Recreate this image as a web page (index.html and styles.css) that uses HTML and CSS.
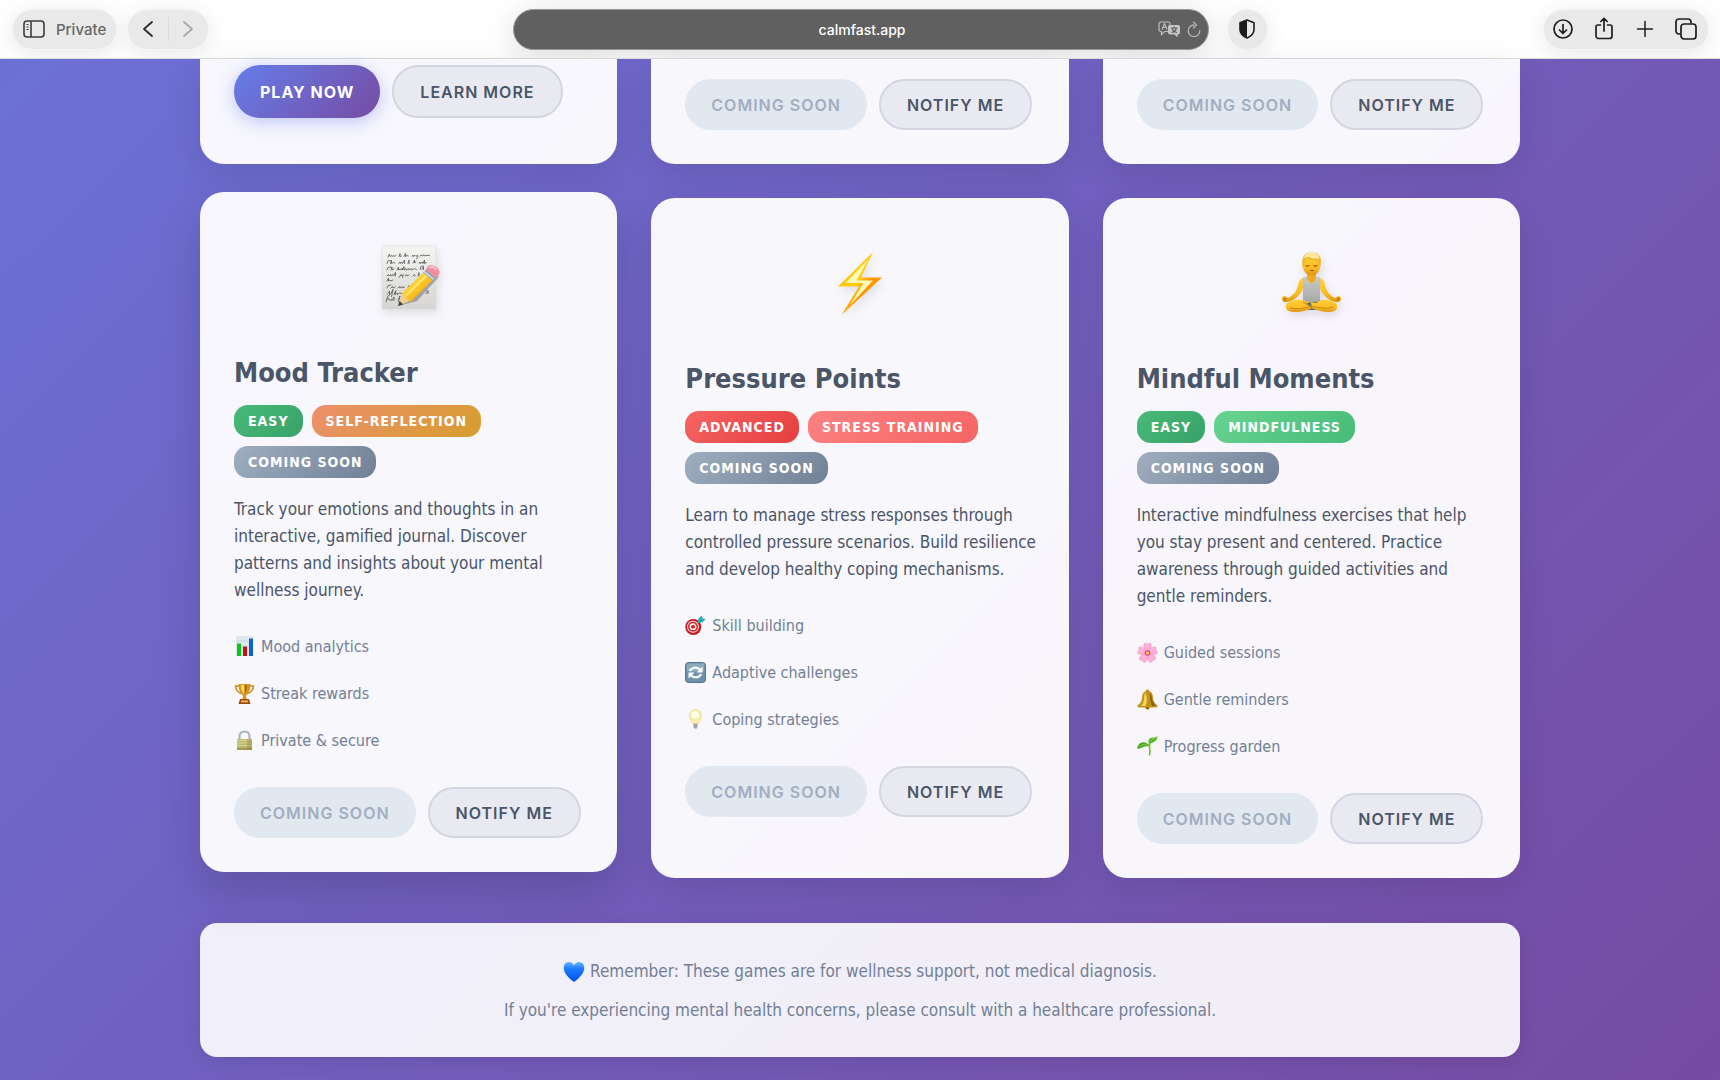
FILE: index.html
```html
<!DOCTYPE html>
<html lang="en">
<head>
<meta charset="utf-8">
<meta name="viewport" content="width=device-width, initial-scale=1">
<title>CalmFast Games</title>
<link rel="stylesheet" href="styles.css">
</head>
<body>
<header class="toolbar">
  <div class="toolbar-left">
    <button class="pill pill-private" type="button">
      <svg width="22" height="18" viewBox="0 0 22 18" fill="none" stroke="#3c3c3c" stroke-width="1.6"><rect x="1" y="1" width="20" height="16" rx="3"/><path d="M8 1v16"/><path d="M3.4 4.5h2.2M3.4 7h2.2M3.4 9.500h2.200" stroke-width="1.200"/></svg>
      <span>Private</span>
    </button>
    <div class="pill pill-nav">
      <button type="button" aria-label="Back"><svg width="12" height="18" viewBox="0 0 12 18" fill="none" stroke="#2b2b2b" stroke-width="1.800" stroke-linecap="round" stroke-linejoin="round"><path d="M10 2L2 9l8 7"/></svg></button>
      <button type="button" aria-label="Forward"><svg width="12" height="18" viewBox="0 0 12 18" fill="none" stroke="#a9a9a9" stroke-width="1.800" stroke-linecap="round" stroke-linejoin="round"><path d="M2 2l8 7-8 7"/></svg></button>
    </div>
  </div>
  <div class="address">
    <input type="text" value="calmfast.app" aria-label="Address">
    <button type="button" aria-label="Translate"><svg width="23" height="17" viewBox="0 0 23 17"><path d="M11 10.500H6.500L3.500 13.500v-3H3a2 2 0 0 1-2-2V3a2 2 0 0 1 2-2h7a2 2 0 0 1 2 2v1" fill="none" stroke="#bdbdbd" stroke-width="1.200"/><path d="M4 8.500l2.500-6 2.500 6M5 6.500h3" fill="none" stroke="#bdbdbd" stroke-width="1.200"/><path d="M12 4h8a2 2 0 0 1 2 2v5.500a2 2 0 0 1-2 2h-.5V16.500l-3-3H12a2 2 0 0 1-2-2V6a2 2 0 0 1 2-2z" fill="#c4c4c4"/><path d="M13 7h6.500M16.200 5.500V7M18.500 7c-.7 2.200-2.500 4-4.800 4.600M14.200 7.500c.7 1.900 2.400 3.500 4.800 4" fill="none" stroke="#5f5f5f" stroke-width="1.100"/></svg></button>
    <button type="button" aria-label="Reload"><svg width="14" height="17" viewBox="0 0 14 17" fill="none" stroke="#b5b5b5" stroke-width="1.300" stroke-linecap="round" stroke-linejoin="round"><path d="M7 4a5.800 5.800 0 1 0 5.800 5.800"/><path d="M6.500 1l3 3-3 3"/></svg></button>
  </div>
  <div class="toolbar-right">
    <button class="pill pill-round" type="button" aria-label="Privacy report"><svg width="16" height="20" viewBox="0 0 16 20"><path d="M8 1l7 2.800v6.700c0 4-3 6.700-7 8.500-4-1.800-7-4.500-7-8.500V3.800z" fill="none" stroke="#1e1e1e" stroke-width="1.600" stroke-linejoin="round"/><path d="M8 1v18c-4-1.800-7-4.500-7-8.500V3.800z" fill="#1e1e1e"/></svg></button>
    <div class="pill pill-actions">
      <button type="button" aria-label="Downloads"><svg width="22" height="24" viewBox="0 0 22 24" fill="none" stroke="#1e1e1e" stroke-width="1.700" stroke-linecap="round" stroke-linejoin="round"><circle cx="11" cy="12" r="9"/><path d="M11 7.500v9M7.500 13l3.500 3.500 3.500-3.500"/></svg></button>
      <button type="button" aria-label="Share"><svg width="22" height="24" viewBox="0 0 22 24" fill="none" stroke="#1e1e1e" stroke-width="1.700" stroke-linecap="round" stroke-linejoin="round"><path d="M7.500 8H5a2 2 0 0 0-2 2v9a2.500 2.500 0 0 0 2.500 2.500h11A2.500 2.500 0 0 0 19 19v-9a2 2 0 0 0-2-2h-2.500M11 14V1.500M7.800 4.500L11 1.400l3.200 3.100"/></svg></button>
      <button type="button" aria-label="New tab"><svg width="22" height="24" viewBox="0 0 22 24" fill="none" stroke="#1e1e1e" stroke-width="1.500" stroke-linecap="round"><path d="M11 4.500v15M3.500 12h15"/></svg></button>
      <button type="button" aria-label="Tab overview"><svg width="22" height="24" viewBox="0 0 22 24" fill="none" stroke="#1e1e1e" stroke-width="1.700" stroke-linejoin="round"><rect x="6" y="7" width="15" height="15" rx="3"/><path d="M5.500 17H4a3 3 0 0 1-3-3V5a3 3 0 0 1 3-3h9a3 3 0 0 1 3 3v1.500"/></svg></button>
    </div>
  </div>
</header>

<main class="page">
  <section class="grid grid-top">
    <article class="card card-cut card-playable">
      <div class="actions"><button class="btn btn-primary" type="button">Play Now</button><button class="btn btn-outline" type="button">Learn More</button></div>
    </article>
    <article class="card card-cut">
      <div class="actions"><button class="btn btn-soon" type="button" disabled>Coming Soon</button><button class="btn btn-outline" type="button">Notify Me</button></div>
    </article>
    <article class="card card-cut">
      <div class="actions"><button class="btn btn-soon" type="button" disabled>Coming Soon</button><button class="btn btn-outline" type="button">Notify Me</button></div>
    </article>
  </section>

  <section class="grid">
    <article class="card card-hover">
      <div class="card-icon">
        <svg width="70" height="70" viewBox="0 0 70 70">
          <defs>
            <linearGradient id="paper" x2="0" y2="1"><stop stop-color="#f4f4f3"/><stop offset="1" stop-color="#d6d5d3"/></linearGradient>
            <linearGradient id="pencil" x1="0" y1="0" x2="1" y2="1"><stop offset=".3" stop-color="#ffd83a"/><stop offset=".6" stop-color="#fbb91c"/><stop offset="1" stop-color="#c98208"/></linearGradient>
          </defs>
          <path d="M8 4h54v63H8z" fill="url(#paper)" stroke="#dddcda" stroke-width=".6"/>
          <g fill="none" stroke="#555" stroke-width=".8" stroke-linecap="round">
            <path d="M14 15l1.500-3 .5 2.500 1.500-1 .5 1 1.500-1 .5 1 2-1M25 14.500l1-3v3l1.500-.5M30 14.500l1.500-3v3l1.500-1 1.500.5M38 14.500l1-1.500.5 1.500 1.500-1.200 1 1 1.500-1.200.5 1.200-1.500 2.500M46 14l1.500-1 .5 1 2-1.200.5 1 5-.5"/>
            <path d="M13 21.500l1-2.500 3-.5M16.500 21.500l1-3v3l2-1 1.500.5M25 21.500l1-1.500.5 1.500 1.500-1.500.5 1.500 2-3.500v3.500M34 21.500l1-3.500v3.500M39 21l1.500-3v3l1.500-1M45 21.500l1-1.500.5 1.500 2-1.500.5 1.500 1.500-3.500v3.500l2-1"/>
            <path d="M13 28l1-2.500 3-.5M17 28l1-3v3l2-1M23 28l1.500-3v3l2-1 .5 1 1.500-2v2l1.500-3.500v3.500l2-1.500.5 1.500 2-1.500.5 1.500 2-1.500.5 1.500 3-1.500 2 1M46 27.500l1-3 2-.5M48 27.500l1.500-3v3"/>
            <path d="M13 34l1.500-1.500.5 1.500 1.500-1.500.5 1.500 2-1.500.5 1.500 2-3.500v3.500M25 35.500l2-3 .5 1.500 1.500-1.500-.5 3M31 34l1.500-1.500.5 1.500 2-1M39 34l1.500-1.500.5 1.500M44 34l1-3.500v3.500"/>
            <path d="M13 39l1.500-3v3l1.500-1 1 1 2-1M13 46l1-2.500 3-.5M17 46l1.500-1.500.5 1.500 2-1M24 46l1.500-1.500.5 1.500 2-1.500.5 1.500 2-1M34 45l1-1.500.5 1.500"/>
            <path d="M13 52.500l1.500-1.500 1-2v3.500l1.500-1 2-4-1.500 7M20 52.500l2-4-1 4 2-1.500.5 1.500 2-1.500 3 .5M52 51.500l2-3v3"/>
            <path d="M12 60l2-6 1.500-1M13 57h2l1 1.500 1.500-1.500.5 1.500 2-3.500v3.500M24 58l2-4-1.500 6"/>
          </g>
          <path d="M24 64L34 47 55 27l10 8-22 24z" fill="#333" opacity=".35"/>
          <path d="M24 64l4.500-13.500 8 8z" fill="#f0cd91"/><path d="M24 64l1.600-5 3.500 3.400z" fill="#3d3d3d"/>
          <path d="M28.500 50.500L51 29l9 7.500-23 23q-2.500 1-2.500-2-3.500.5-3-3-3.500-.5-3-4z" fill="url(#pencil)"/>
          <path d="M31.500 54L55 31" stroke="#ffe368" stroke-width="2.500"/>
          <path d="M49 30.500l3-3 9.500 7.500-3 3.500z" fill="#94a8ba"/><path d="M50 29.500l9.500 7.800" stroke="#d5e1ea" stroke-width="1.200"/>
          <path d="M52 27.500q2-6 7-4 7 2 6.500 8-1 3-4 4.500z" fill="#ee8f99"/><path d="M55.500 26q3-3 7 2" fill="none" stroke="#ffc4c8" stroke-width="2"/>
        </svg>
      </div>
      <h2>Mood Tracker</h2>
      <div class="badges"><span class="badge easy">Easy</span><span class="badge reflection">Self-Reflection</span><span class="badge soon">Coming Soon</span></div>
      <p class="description">Track your emotions and thoughts in an interactive, gamified journal. Discover patterns and insights about your mental wellness journey.</p>
      <ul class="features">
        <li><svg viewBox="0 0 21 21"><path d="M2 0h17.500v20H2z" fill="#dce8ee"/><path d="M2 5h17M2 10h17M2 15h17" stroke="#c2d2da" stroke-width=".6"/><path d="M3 7.500h4V20H3z" fill="#0fc41a"/><path d="M9 10.500h4V20H9z" fill="#c4121a"/><path d="M15 2.500h4V20h-4z" fill="#1262c4"/></svg>Mood analytics</li>
        <li><svg viewBox="0 0 21 21"><path d="M5 3H1.500Q2 9 7.500 10.500M16 3h3.500Q19 9 13.500 10.500" fill="none" stroke="#c9871a" stroke-width="1.500"/><path d="M4.500 1h12q0 9-4.500 11.500l.5 4h-4l.5-4Q4.500 10 4.500 1z" fill="#d8961a"/><path d="M7 2q0 6 3 9V2z" fill="#ffe06a"/><path d="M13 2q0 6-2 9V2z" fill="#a96508"/><path d="M6 16h9l1.500 5H4.500z" fill="#9d4c12"/><path d="M7 17.500h7v1.800H7z" fill="#f4c14a"/></svg>Streak rewards</li>
        <li><svg viewBox="0 0 21 21"><path d="M5.500 10V6.500q0-5 5-5t5 5V10" fill="none" stroke="#a3b2bd" stroke-width="2"/><rect x="3" y="9" width="15" height="11" rx="1" fill="#bdb66d"/><path d="M3 10.500h15M3 13h15M3 15.500h15" stroke="#d8d493" stroke-width="1"/><path d="M13 9.500h5V20h-5z" fill="#847b38" opacity=".35"/><path d="M3 19h15" stroke="#8c8442" stroke-width="1.200"/></svg>Private &amp; secure</li>
      </ul>
      <div class="actions"><button class="btn btn-soon" type="button" disabled>Coming Soon</button><button class="btn btn-outline" type="button">Notify Me</button></div>
    </article>

    <article class="card">
      <div class="card-icon">
        <svg width="70" height="70" viewBox="0 0 70 70">
          <defs><linearGradient id="bolt" x2="1" y2="1"><stop stop-color="#ffb400"/><stop offset=".45" stop-color="#ffcf14"/><stop offset=".6" stop-color="#ff9300"/><stop offset="1" stop-color="#ffae13"/></linearGradient></defs>
          <path d="M48 4L13 38.500h21L16.500 67 57 29.500H36z" fill="url(#bolt)"/>
          <path d="M43 11.500L20.500 35h17.800L25 57l23-24.500H31.500z" fill="#fffbb5"/>
        </svg>
      </div>
      <h2>Pressure Points</h2>
      <div class="badges"><span class="badge advanced">Advanced</span><span class="badge stress">Stress Training</span><span class="badge soon">Coming Soon</span></div>
      <p class="description">Learn to manage stress responses through controlled pressure scenarios. Build resilience and develop healthy coping mechanisms.</p>
      <ul class="features">
        <li><svg viewBox="0 0 21 21"><circle cx="8.300" cy="12" r="8" fill="#c21a24"/><circle cx="8" cy="11.700" r="6" fill="#f3dede"/><circle cx="8" cy="11.700" r="5" fill="#d3222c"/><circle cx="8" cy="11.700" r="3.400" fill="#fff"/><circle cx="8" cy="11.700" r="2" fill="#cf1f29"/><path d="M8 11.700l7-6" stroke="#bd8a37" stroke-width="1"/><path d="M12.500 7.500l1-4L17 .5l.5 3 3.200.5-3.200 3.200-4 .8z" fill="#2ba9b8"/></svg>Skill building</li>
        <li><svg viewBox="0 0 21 21"><rect x=".5" y=".5" width="20" height="20" rx="3" fill="#6e92ae" stroke="#56748e"/><path d="M2 1.500h17v8H2z" fill="#9bb7ca" opacity=".65"/><g fill="none" stroke="#fff" stroke-width="2.200"><path d="M4.500 8.800Q10 2.800 15.500 8"/><path d="M16.500 12.300Q11 18.200 5.500 13"/></g><path d="M17.500 4.500v6h-6zM3.500 16.500v-6h6z" fill="#fff"/></svg>Adaptive challenges</li>
        <li><svg viewBox="0 0 21 21"><path d="M8 14.500Q4.500 9.500 4.500 6.500 5 .7 10.500.5q5.500.2 6 6 0 3-3.500 8z" fill="#faedaa" stroke="#ead58b" stroke-width=".6"/><circle cx="10" cy="6" r="3.800" fill="#fffce9"/><path d="M8.300 14.500h4.500l-.5 4.500q-1.800 1.800-3.500 0z" fill="#bcbcb9"/><path d="M8.500 16h4M8.700 18h3.500" stroke="#777" stroke-width=".7"/></svg>Coping strategies</li>
      </ul>
      <div class="actions"><button class="btn btn-soon" type="button" disabled>Coming Soon</button><button class="btn btn-outline" type="button">Notify Me</button></div>
    </article>

    <article class="card">
      <div class="card-icon">
        <svg width="70" height="70" viewBox="0 0 70 70">
          <defs><linearGradient id="skin" x2="0" y2="1"><stop stop-color="#ffd038"/><stop offset=".65" stop-color="#fbbc22"/><stop offset="1" stop-color="#dd9211"/></linearGradient><linearGradient id="shirt" x2="0" y2="1"><stop stop-color="#c9c9c9"/><stop offset="1" stop-color="#a5a5a5"/></linearGradient></defs>
          <path d="M28 30q-5 0-6 7-1 7-8 12-3 2-5-1-3 0-3 3 1 4 5 3 7-1 13-8 3-4 4-10zM43 30q5 0 6 7 1 7 8 12 3 2 5-1 3 0 3 3-1 4-5 3-7-1-13-8-3-4-4-10z" fill="url(#skin)"/>
          <circle cx="9" cy="51" r="1.500" fill="#c87b0d"/><circle cx="62" cy="51" r="1.500" fill="#c87b0d"/>
          <path d="M31 23h9v9l-4.500 4-4.500-4z" fill="#efaa1e"/>
          <path d="M27 29h4q0 6 4.500 6t4.500-6h4q1 6 0 12v15H27V41q-1-6 0-12z" fill="url(#shirt)"/>
          <path d="M28 54h15v8H28z" fill="#5d6870"/>
          <path d="M26 52q-8-1-13 2-4 2-3 6 1 4 9 4 10 0 17-4l-1-5zM45 52q8-1 13 2 4 2 3 6-1 4-9 4-12 0-22-8l4-2 6 1z" fill="url(#skin)"/>
          <path d="M27 54q8 6 18 6 7 1 12-1M33 59q-8 3-19 1" fill="none" stroke="#c88510" stroke-width="1"/>
          <rect x="27" y="7" width="17" height="20" rx="8" fill="url(#skin)"/>
          <path d="M26.500 19q-2-14 8-14.500 10-.5 10.500 8l-.5 7Q42.500 16 42 12.500q-7 .5-11.500-2.500-2.500 3-3 9z" fill="#edb935"/>
          <path d="M28 10q1-5 7-5.500 7-.3 8.500 5.500-4 2-11-1z" fill="#ffe79b"/>
          <path d="M29.500 17.500q2 1.200 4 0M37.500 17.500q2 1.200 4 0M34 22.500h3.500" fill="none" stroke="#8b5b15" stroke-width="1.200"/>
        </svg>
      </div>
      <h2>Mindful Moments</h2>
      <div class="badges"><span class="badge easy">Easy</span><span class="badge mindfulness">Mindfulness</span><span class="badge soon">Coming Soon</span></div>
      <p class="description">Interactive mindfulness exercises that help you stay present and centered. Practice awareness through guided activities and gentle reminders.</p>
      <ul class="features">
        <li><svg viewBox="0 0 21 21"><g fill="#ffafd8" stroke="#ef86bb" stroke-width=".5"><path id="petal" d="M10.500 11Q5 5 7.500 1.200L10.500 2l3-.8Q16 5 10.500 11z"/><use href="#petal" transform="rotate(72 10.500 11)"/><use href="#petal" transform="rotate(144 10.500 11)"/><use href="#petal" transform="rotate(216 10.500 11)"/><use href="#petal" transform="rotate(288 10.500 11)"/></g><circle cx="10.500" cy="11" r="2.800" fill="#d94a87"/><circle cx="10.500" cy="11" r="1.600" fill="#f4d43c"/></svg>Guided sessions</li>
        <li><svg viewBox="0 0 21 21"><circle cx="10.500" cy="2.200" r="1.700" fill="#b48618"/><circle cx="10.500" cy="18.500" r="2" fill="#91560b"/><path d="M10.500 2q-5.500 0-5.500 7 0 4-4.500 7.500Q0 18.500 3 18.500h15q3 0 2.500-2Q16 13 16 9q0-7-5.500-7z" fill="#c39218"/><path d="M8.500 3.500Q6.500 6 7 10q0 4-3 7h4.500Q10.500 13 9.800 8z" fill="#f1d55b"/><path d="M13 4q2.500 3 2 7l3.500 6H15q-2-5-2-13z" fill="#885c0a"/></svg>Gentle reminders</li>
        <li><svg viewBox="0 0 21 21"><path d="M12.500 19.500Q14 11 10.500 8M12.300 11.500Q12.500 6 16 3.500" fill="none" stroke="#7abb33" stroke-width="1.600"/><path d="M0 12.500Q2 5 8 6.500q3 .5 3 3.500-5 .5-7 2-2 1-4 .5z" fill="#48a61f"/><path d="M11.500 7.500Q10.500 2 15.500 1.500q3 .5 5-1.500 0 7-9 7.500z" fill="#57b629"/><path d="M2 11q4-4 8-2M12.500 6q3-4 7-4.500" fill="none" stroke="#91d44d" stroke-width=".8"/></svg>Progress garden</li>
      </ul>
      <div class="actions"><button class="btn btn-soon" type="button" disabled>Coming Soon</button><button class="btn btn-outline" type="button">Notify Me</button></div>
    </article>
  </section>

  <footer class="note">
    <p><svg width="22" height="22" viewBox="0 0 22 22"><defs><linearGradient id="heart" x2="0" y2="1"><stop stop-color="#65b4ff"/><stop offset=".35" stop-color="#1c7bff"/><stop offset="1" stop-color="#0052ea"/></linearGradient></defs><path d="M11 21Q1 14 .7 7 1 1.200 6 1q3.500 0 5 3.500Q12.500 1 16 1q5 .2 5.300 6Q21 14 11 21z" fill="url(#heart)"/></svg>Remember: These games are for wellness support, not medical diagnosis.</p>
    <p>If you're experiencing mental health concerns, please consult with a healthcare professional.</p>
  </footer>
</main>
</body>
</html>
```
FILE: styles.css
```css
* { box-sizing: border-box; }

body {
  margin: 0;
  min-height: 100vh;
  background: linear-gradient(135deg, #6c71d7 0%, #764ba2 100%);
  font-family: "DejaVu Sans Condensed", "DejaVu Sans", Tahoma, sans-serif;
  color: #4a5568;
}

button { font-family: Inter, sans-serif; }
svg { display: block; flex: none; }

/* Browser toolbar */
.toolbar {
  display: grid;
  grid-template-columns: 1fr minmax(0, 696px) 1fr;
  align-items: center;
  height: 59px;
  padding: 0 12px 0 13px;
  overflow: hidden;
  background: #fff;
  border-bottom: 1px solid #dcdcdc;
  font-family: Inter, sans-serif;
}
.toolbar button { border: 0; background: none; padding: 0; display: flex; align-items: center; justify-content: center; }
.toolbar-left { display: flex; gap: 12px; }
.toolbar-right { display: flex; justify-content: space-between; padding-left: 19px; }
.toolbar .pill {
  display: flex;
  align-items: center;
  height: 39px;
  border-radius: 20px;
  background: #e9e9e9;
  box-shadow: 0 0 0 1px #f4f4f4, 0 4px 24px rgba(0, 0, 0, .1);
}
.toolbar .pill-private { gap: 11px; padding: 0 10px; font-size: 15px; font-weight: 500; color: #666; }
.pill-nav { width: 80px; }
.pill-nav button { flex: 1; height: 24px; }
.pill-nav button + button { border-left: 1px solid #d9d9d9; }
.toolbar .pill-round { width: 39px; }
.pill-actions { gap: 19px; padding: 0 11px 0 8px; }

.address {
  display: flex;
  align-items: center;
  height: 41px;
  padding-right: 7px;
  gap: 6px;
  border-radius: 21px;
  border: 1px solid #989898;
  background: #606060;
  box-shadow: 0 4px 30px rgba(0, 0, 0, .14);
}
.address input {
  flex: 1;
  min-width: 0;
  border: 0;
  padding: 0 0 0 59px;
  background: none;
  color: #fff;
  font: 500 14px Inter, sans-serif;
  text-align: center;
}

/* Page */
.page { max-width: 1320px; margin: 0 auto; padding-bottom: 23px; }
.grid { display: grid; grid-template-columns: repeat(3, 1fr); gap: 34px; margin-bottom: 45px; }
.grid-top { margin-bottom: 34px; }

.card {
  padding: 34px;
  border-radius: 24px;
  background: rgba(255, 255, 255, .95);
  box-shadow: 0 10px 34px rgba(0, 0, 0, .1);
}
.card-cut { padding-top: 20px; border-radius: 0 0 24px 24px; }
.card-playable { padding-top: 6px; }
.card-hover { transform: translateY(-6px); box-shadow: 0 20px 44px rgba(0, 0, 0, .15); }

.card-icon { display: flex; justify-content: center; padding: 16px 0 38px; }
.card-icon svg { filter: drop-shadow(2px 4px 4px rgba(0, 0, 0, .1)); }

h2 { margin: 0 0 9px; font-size: 27px; line-height: 46px; font-weight: 700; }

.badges { display: flex; flex-wrap: wrap; gap: 9px; margin-bottom: 18px; }
.badge {
  padding: 0 14px;
  border-radius: 14px;
  color: #fff;
  font-size: 14px;
  font-weight: 700;
  line-height: 32px;
  letter-spacing: 1px;
  text-transform: uppercase;
}
.easy { background: linear-gradient(135deg, #48bb78, #38a169); }
.advanced { background: linear-gradient(135deg, #f56565, #e53e3e); }
.soon { background: linear-gradient(135deg, #a0aec0, #718096); }
.reflection { background: linear-gradient(135deg, #ed8f6c, #d69e2e); }
.stress { background: linear-gradient(135deg, #fc8181, #f56565); }
.mindfulness { background: linear-gradient(135deg, #68d391, #48bb78); }

.description { margin: 0 -8px 19px 0; font-size: 17px; line-height: 27px; }

.features { list-style: none; margin: 0 0 23px; padding: 0; color: #718096; font-size: 16px; line-height: 47px; }
.features li { display: flex; align-items: center; gap: 6px; }
.features svg { width: 21px; height: 21px; }

.actions { display: flex; gap: 12px; align-items: flex-start; }
.btn {
  min-height: 51px;
  padding: 0 26px;
  border: 2px solid transparent;
  border-radius: 26px;
  font-size: 16px;
  font-weight: 600;
  letter-spacing: 1px;
  text-transform: uppercase;
  white-space: nowrap;
}
.btn-primary { min-height: 53px; border: 0; background: linear-gradient(135deg, #667eea, #764ba2); color: #fff; font-weight: 700; box-shadow: 0 4px 17px rgba(102, 126, 234, .4); }
.btn-outline { background: #e9eaf1; border-color: #d3d6e0; color: #4a5568; }
.card-playable .btn-outline { min-height: 53px; }
.btn-soon { border: 0; background: #e2e8f0; color: #a0aec0; }

.note {
  padding: 29px 34px 27px;
  border-radius: 17px;
  background: rgba(255, 255, 255, .9);
  box-shadow: 0 4px 20px rgba(0, 0, 0, .1);
  color: #718096;
  font-size: 17px;
  text-align: center;
}
.note p { display: flex; justify-content: center; align-items: center; gap: 5px; margin: 0; line-height: 39px; }
```
